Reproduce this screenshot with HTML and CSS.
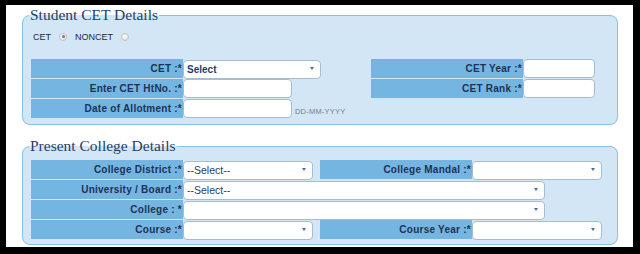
FILE: index.html
```html
<!DOCTYPE html>
<html lang="en">
<head>
  <meta charset="UTF-8" />
  <title>Student CET Details</title>
  <link rel="stylesheet" href="styles.css">
</head>
<body>
  <div class="frame">
    <!-- CET -->
    <fieldset class="box">
      <legend>Student CET Details</legend>
      <div class="radios">
        <label>CET <input type="radio" name="cettype" checked></label>
        <label>NONCET <input type="radio" name="cettype"></label>
      </div>
      <div class="grid grid-cet">
        <div class="lbl">CET :*</div>
        <div class="fld"><span class="sel w137"><select class="strong"><option>Select</option></select></span></div>
        <div class="lbl">CET Year :*</div>
        <div class="fld"><input type="text" class="txt w72"></div>

        <div class="lbl">Enter CET HtNo. :*</div>
        <div class="fld"><input type="text" class="txt w108"></div>
        <div class="lbl">CET Rank :*</div>
        <div class="fld"><input type="text" class="txt w72"></div>

        <div class="lbl">Date of Allotment :*</div>
        <div class="fld"><input type="text" class="txt w108"><span class="hint">DD-MM-YYYY</span></div>
      </div>
    </fieldset>

    <!-- College -->
    <fieldset class="box box-college">
      <legend>Present College Details</legend>
      <div class="grid grid-college">
        <div class="lbl">College District :*</div>
        <div class="fld"><span class="sel w130"><select><option>--Select--</option></select></span></div>
        <div class="lbl">College Mandal :*</div>
        <div class="fld"><span class="sel w130"><select><option></option></select></span></div>

        <div class="lbl">University / Board :*</div>
        <div class="fld span3"><span class="sel w362"><select><option>--Select--</option></select></span></div>

        <div class="lbl">College : *</div>
        <div class="fld span3"><span class="sel w362"><select><option></option></select></span></div>

        <div class="lbl">Course :*</div>
        <div class="fld"><span class="sel w130"><select><option></option></select></span></div>
        <div class="lbl">Course Year :*</div>
        <div class="fld"><span class="sel w130"><select><option></option></select></span></div>
      </div>
    </fieldset>
  </div>
</body>
</html>
```

FILE: styles.css
```css
* { box-sizing: border-box; }
body { margin: 0; background: #000; font-family: "Liberation Sans", Arial, sans-serif; }

.frame {
  background: #fff;
  margin: 5px 7px 0 6px;
  height: 242px;
  padding-top: 1px;
  overflow: hidden;
}

/* fieldsets */
.box {
  margin: 0 15px 0 16px;
  padding: 0 8px 6px 8px;
  border: 1px solid #86c3e6;
  border-radius: 8px;
  background: #d2e6f5;
}
.box legend {
  font-family: "Liberation Serif", "Times New Roman", serif;
  font-size: 15.5px;
  color: #24406a;
  padding: 0 1px;
  margin-left: -2px;
}
.box-college { margin-top: 12px; padding-bottom: 5px; }

/* radio row */
.radios {
  display: flex;
  align-items: center;
  gap: 8px;
  padding: 6px 0 0 2px;
  height: 19px;
  font-size: 9px;
  color: #1d2a3a;
}
.radios label { display: flex; align-items: center; gap: 8px; }
.radios input {
  appearance: none;
  margin: 0;
  width: 8px; height: 8px;
  border-radius: 50%;
  border: 1px solid #c4c4c4;
  background: radial-gradient(circle at 40% 35%, #fbfbfb, #dcdcdc);
  position: relative;
}
.radios input:checked::after {
  content: "";
  position: absolute;
  left: 1.5px; top: 1.5px;
  width: 3px; height: 3px;
  border-radius: 50%;
  background: #7a7a7a;
}

/* label / field grid */
.grid { display: grid; row-gap: 1px; grid-auto-rows: 19px; }
.grid-cet { grid-template-columns: 152px 188px 152px 72px; margin-top: 16px; }
.grid-college { grid-template-columns: 152px 137px 152px 130px; margin-top: 5px; }
.lbl {
  background: #75b5e1;
  color: #1b3356;
  font-size: 10px;
  font-weight: bold;
  letter-spacing: 0.25px;
  text-align: right;
  padding-right: 1px;
  line-height: 19px;
  white-space: nowrap;
}
.fld { display: flex; align-items: center; }
.span3 { grid-column: span 3; }

.txt, .sel select {
  height: 19px;
  border: 1px solid #a6bcd2;
  border-radius: 4px;
  background: #fff;
  margin: 0;
}
.w72 { width: 72px; }
.w108 { width: 109px; }
.w130 { width: 130px; }
.w137 { width: 138px; }
.w362 { width: 362px; }

.sel { position: relative; display: inline-block; height: 19px; }
.sel select {
  appearance: none;
  width: 100%;
  padding: 0 0 0 3px;
  font-family: "Liberation Sans", Arial, sans-serif;
  font-size: 10.5px;
  color: #1f3d6b;
}
.sel select.strong { font-weight: bold; font-size: 10px; }
.sel::after {
  content: "";
  position: absolute;
  right: 7px; top: 8px;
  border-left: 2.5px solid transparent;
  border-right: 2.5px solid transparent;
  border-top: 3px solid #4f6f96;
}

.hint {
  font-size: 7.5px;
  color: #7a7f88;
  margin: 5px 0 0 3px;
  letter-spacing: 0.2px;
}
```
